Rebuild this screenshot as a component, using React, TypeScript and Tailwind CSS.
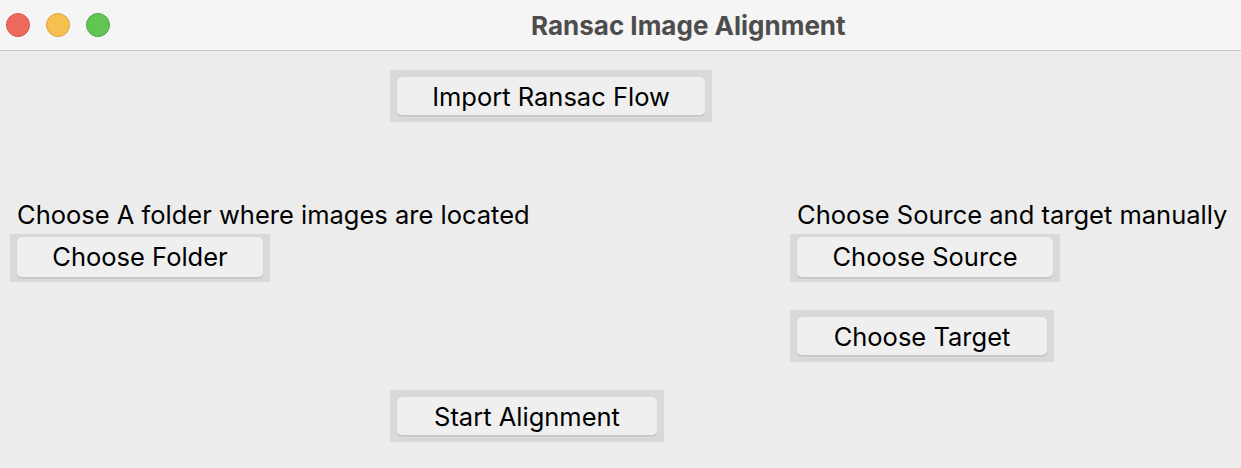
const font = { fontFamily: "Inter, 'Noto Sans', sans-serif" };

type FrameButtonProps = {
  label: string;
  width: string;
  frame: string;
  height: string;
};

const FrameButton = ({ label, width, frame, height }: FrameButtonProps) => {
  return (
    <div className={`bg-[#d9d9d9] px-[6px] ${frame}`}>
      <button
        type="button"
        className={`flex items-center justify-center rounded-[6px] border border-[#d6d6d6] border-b-[#c6c6c6] bg-[#efefef] text-[25.5px] text-black shadow-[0_1px_0_#cbcbcb] ${width} ${height}`}
      >
        {label}
      </button>
    </div>
  );
};

export default function App() {
  return (
    <div
      className="flex h-[468px] w-[1241px] flex-col overflow-hidden bg-[#ececec]"
      style={font}
    >
      <div className="flex h-[51px] shrink-0 items-center border-b border-[#c9c9c9] bg-[#f5f5f5]">
        <div className="flex items-center gap-[16px] pl-[6px]">
          <span className="size-[24px] rounded-full border border-[#d9534c] bg-[#ee6a5f]" />
          <span className="size-[24px] rounded-full border border-[#d9a13a] bg-[#f5c04f]" />
          <span className="size-[24px] rounded-full border border-[#4fa744] bg-[#61c554]" />
        </div>
        <div className="ml-[421px] text-[26px] font-bold text-[#4d4d4d]">
          Ransac Image Alignment
        </div>
      </div>

      <div className="flex flex-col">
        <div className="mt-[19px] pl-[390px]">
          <div className="inline-block">
            <FrameButton
              label="Import Ransac Flow"
              width="w-[310px]"
              height="h-[40px] pt-[3px]"
              frame="py-[6px]"
            />
          </div>
        </div>

        <div className="mt-[81px] flex">
          <div className="flex w-[790px] flex-col items-start pl-[10px]">
            <div className="pb-[7px] pl-[7px] text-[25.5px] leading-[24px] text-black">
              Choose A folder where images are located
            </div>
            <FrameButton
              label="Choose Folder"
              width="w-[248px]"
              height="h-[42px]"
              frame="pt-[2px] pb-[4px]"
            />
          </div>
          <div className="flex flex-col items-start">
            <div className="pb-[7px] pl-[7px] text-[25.5px] leading-[24px] text-black">
              Choose Source and target manually
            </div>
            <FrameButton
              label="Choose Source"
              width="w-[258px]"
              height="h-[42px]"
              frame="pt-[2px] pb-[4px]"
            />
            <div className="mt-[28px]">
              <FrameButton
                label="Choose Target"
                width="w-[252px]"
                height="h-[40px] pt-[3px]"
                frame="py-[6px]"
              />
            </div>
          </div>
        </div>

        <div className="mt-[28px] pl-[390px]">
          <div className="inline-block">
            <FrameButton
              label="Start Alignment"
              width="w-[262px]"
              height="h-[40px] pt-[3px]"
              frame="py-[6px]"
            />
          </div>
        </div>
      </div>
    </div>
  );
}
